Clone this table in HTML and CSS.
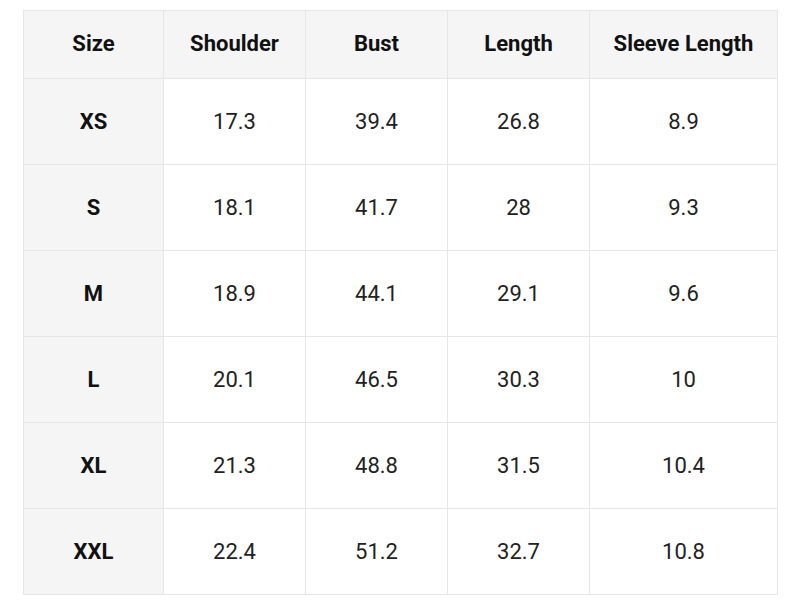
FILE: index.html
```html
<!DOCTYPE html>
<html>
<head>
<meta charset="utf-8">
<link rel="stylesheet" href="styles.css">
</head>
<body>
<table class="size-table">
  <colgroup>
    <col class="c-size"><col class="c-num"><col class="c-num"><col class="c-num"><col class="c-sleeve">
  </colgroup>
  <thead>
    <tr><th>Size</th><th>Shoulder</th><th>Bust</th><th>Length</th><th>Sleeve Length</th></tr>
  </thead>
  <tbody>
    <tr><th>XS</th><td>17.3</td><td>39.4</td><td>26.8</td><td>8.9</td></tr>
    <tr><th>S</th><td>18.1</td><td>41.7</td><td>28</td><td>9.3</td></tr>
    <tr><th>M</th><td>18.9</td><td>44.1</td><td>29.1</td><td>9.6</td></tr>
    <tr><th>L</th><td>20.1</td><td>46.5</td><td>30.3</td><td>10</td></tr>
    <tr><th>XL</th><td>21.3</td><td>48.8</td><td>31.5</td><td>10.4</td></tr>
    <tr><th>XXL</th><td>22.4</td><td>51.2</td><td>32.7</td><td>10.8</td></tr>
  </tbody>
</table>
</body>
</html>
```
FILE: styles.css
```css
html, body {
  margin: 0;
  padding: 0;
  background: #ffffff;
}
body {
  padding: 10px 0 0 23px;
  font-family: Roboto, "Liberation Sans", sans-serif;
  color: #1a1a1a;
}
.size-table {
  border-collapse: collapse;
  table-layout: fixed;
  width: 754px;
}
.c-size { width: 140px; }
.c-num { width: 142px; }
.c-sleeve { width: 188px; }
.size-table th,
.size-table td {
  border: 1.5px solid #e6e6e6;
  text-align: center;
  vertical-align: middle;
  padding: 0;
  font-size: 22px;
  line-height: 26px;
}
.size-table thead tr {
  height: 68px;
}
.size-table thead th {
  padding-bottom: 1px;
  background: #f5f5f5;
  font-weight: 700;
  color: #111;
}
.size-table tbody tr {
  height: 86px;
}
.size-table tbody th {
  background: #f5f5f5;
  font-weight: 700;
  color: #111;
}
.size-table tbody td {
  font-weight: 400;
  color: #222;
}
```
